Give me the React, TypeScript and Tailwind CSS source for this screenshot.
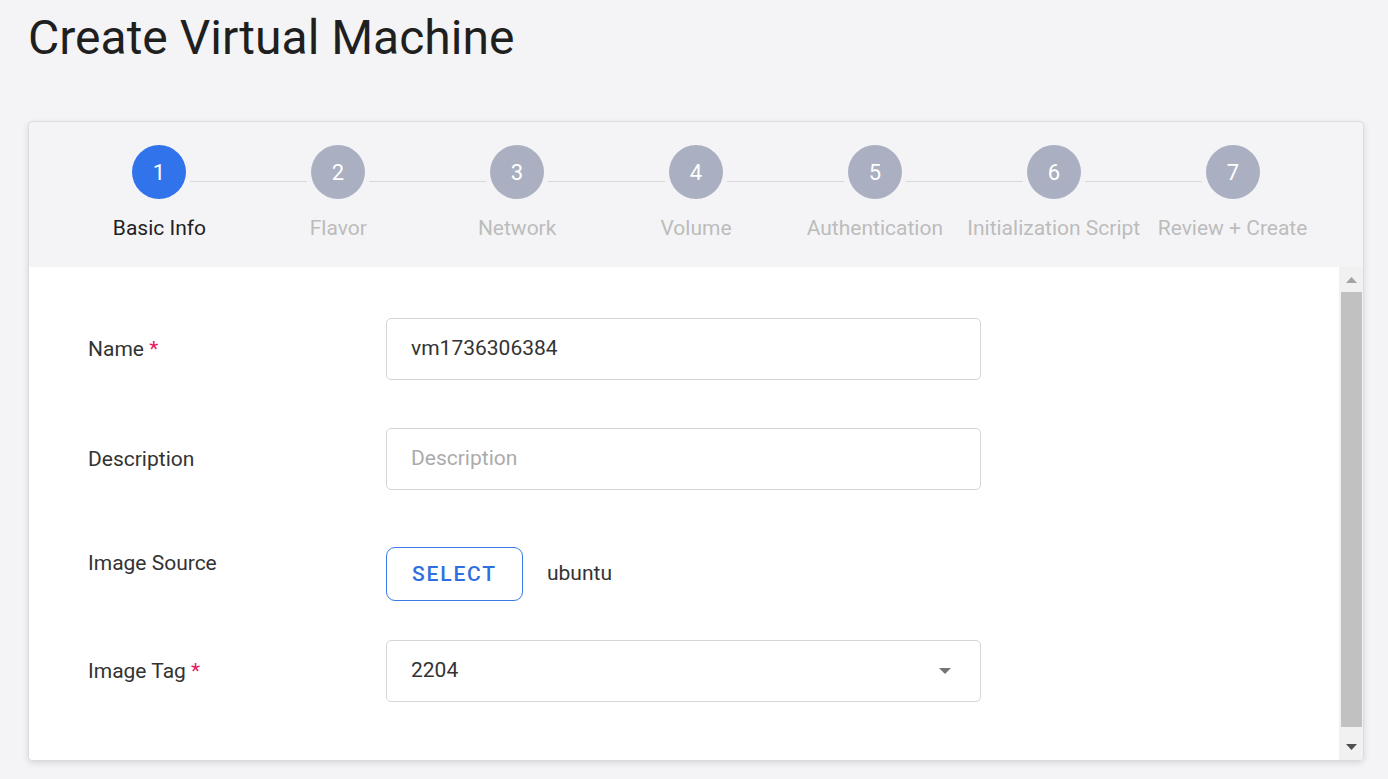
import React from "react";

const steps = [
  "Basic Info",
  "Flavor",
  "Network",
  "Volume",
  "Authentication",
  "Initialization Script",
  "Review + Create",
];

function Circle({ n, active }: { n: number; active: boolean }) {
  return (
    <div
      className={
        "w-[54px] h-[54px] shrink-0 rounded-full flex items-center justify-center text-white text-[22px] " +
        (active ? "bg-[#3073ea]" : "bg-[#aab0c1]")
      }
    >
      {n}
    </div>
  );
}

function Label({ text, required }: { text: string; required?: boolean }) {
  return (
    <div className="w-[298px] shrink-0 text-[21px] text-[#333333] leading-[32px]">
      {text}
      {required && <span className="text-[#e5195f]"> *</span>}
    </div>
  );
}

export default function App() {
  return (
    <div
      className="min-h-[779px] bg-[#f4f4f6] pt-[10px] pl-[28px] pr-[24px]"
      style={{ fontFamily: "Roboto, 'Noto Sans', sans-serif" }}
    >
      <h1 className="text-[48px] leading-[56px] text-[#1f1f1f] font-normal">
        Create Virtual Machine
      </h1>

      <div className="mt-[55px] w-[1336px] h-[640px] rounded-[5px] border border-[#dcdcdf] bg-[#f4f4f6] shadow-[0_2px_6px_rgba(0,0,0,0.12)] flex flex-col overflow-hidden">
        {/* Stepper */}
        <div className="h-[145px] shrink-0 pt-[23px]">
          <div className="flex items-start px-[103px]">
            {steps.map((s, i) => (
              <React.Fragment key={s}>
                <Circle n={i + 1} active={i === 0} />
                {i < steps.length - 1 && (
                  <div className="flex-1 mx-[4px] mt-[36px] h-px bg-[#d9d9dc]" />
                )}
              </React.Fragment>
            ))}
          </div>
          <div className="grid grid-cols-7 px-[41px] mt-[15px]">
            {steps.map((s, i) => (
              <div
                key={s}
                className={
                  "text-center text-[21px] leading-[28px] whitespace-nowrap " +
                  (i === 0 ? "text-[#1f1f1f]" : "text-[#bcbcbc]")
                }
              >
                {s}
              </div>
            ))}
          </div>
        </div>

        {/* Content */}
        <div className="flex-1 flex bg-white min-h-0">
          <div className="flex-1 pl-[59px] pt-[51px]">
            <div className="flex items-center h-[62px]">
              <Label text="Name" required />
              <div className="w-[595px] h-[62px] border border-[#d6d6d6] rounded-[5px] flex items-center px-[24px] text-[21px] text-[#333333]">
                vm1736306384
              </div>
            </div>

            <div className="flex items-center h-[62px] mt-[48px]">
              <Label text="Description" />
              <div className="w-[595px] h-[62px] border border-[#d6d6d6] rounded-[5px] flex items-center px-[24px] text-[21px] text-[#ababab]">
                Description
              </div>
            </div>

            <div className="flex items-start mt-[57px]">
              <Label text="Image Source" />
              <div className="flex items-center">
                <div className="w-[137px] h-[54px] pt-[2px] border border-[#3a7ae8] rounded-[9px] flex items-center justify-center text-[21px] font-medium tracking-[1.8px] text-[#2f6fe0]">
                  SELECT
                </div>
                <div className="ml-[24px] text-[21px] text-[#333333]">ubuntu</div>
              </div>
            </div>

            <div className="flex items-center h-[62px] mt-[39px]">
              <Label text="Image Tag" required />
              <div className="w-[595px] h-[62px] border border-[#d6d6d6] rounded-[5px] flex items-center justify-between pl-[24px] pr-[29px] text-[21px] text-[#333333]">
                <span>2204</span>
                <svg width="12" height="6" viewBox="0 0 12 6">
                  <path d="M0 0 L12 0 L6 6 Z" fill="#757575" />
                </svg>
              </div>
            </div>
          </div>

          {/* Scrollbar */}
          <div className="w-[24px] shrink-0 bg-[#f1f1f1] flex flex-col items-center">
            <div className="h-[25px] w-full flex items-center justify-center">
              <svg width="11" height="6" viewBox="0 0 11 6">
                <path d="M0 6 L11 6 L5.5 0 Z" fill="#a3a3a3" />
              </svg>
            </div>
            <div className="flex-1 w-[21px] bg-[#c1c1c1]" />
            <div className="h-[33px] w-full flex items-end justify-center pb-[10px]">
              <svg width="11" height="6" viewBox="0 0 11 6">
                <path d="M0 0 L11 0 L5.5 6 Z" fill="#505050" />
              </svg>
            </div>
          </div>
        </div>
      </div>
    </div>
  );
}
